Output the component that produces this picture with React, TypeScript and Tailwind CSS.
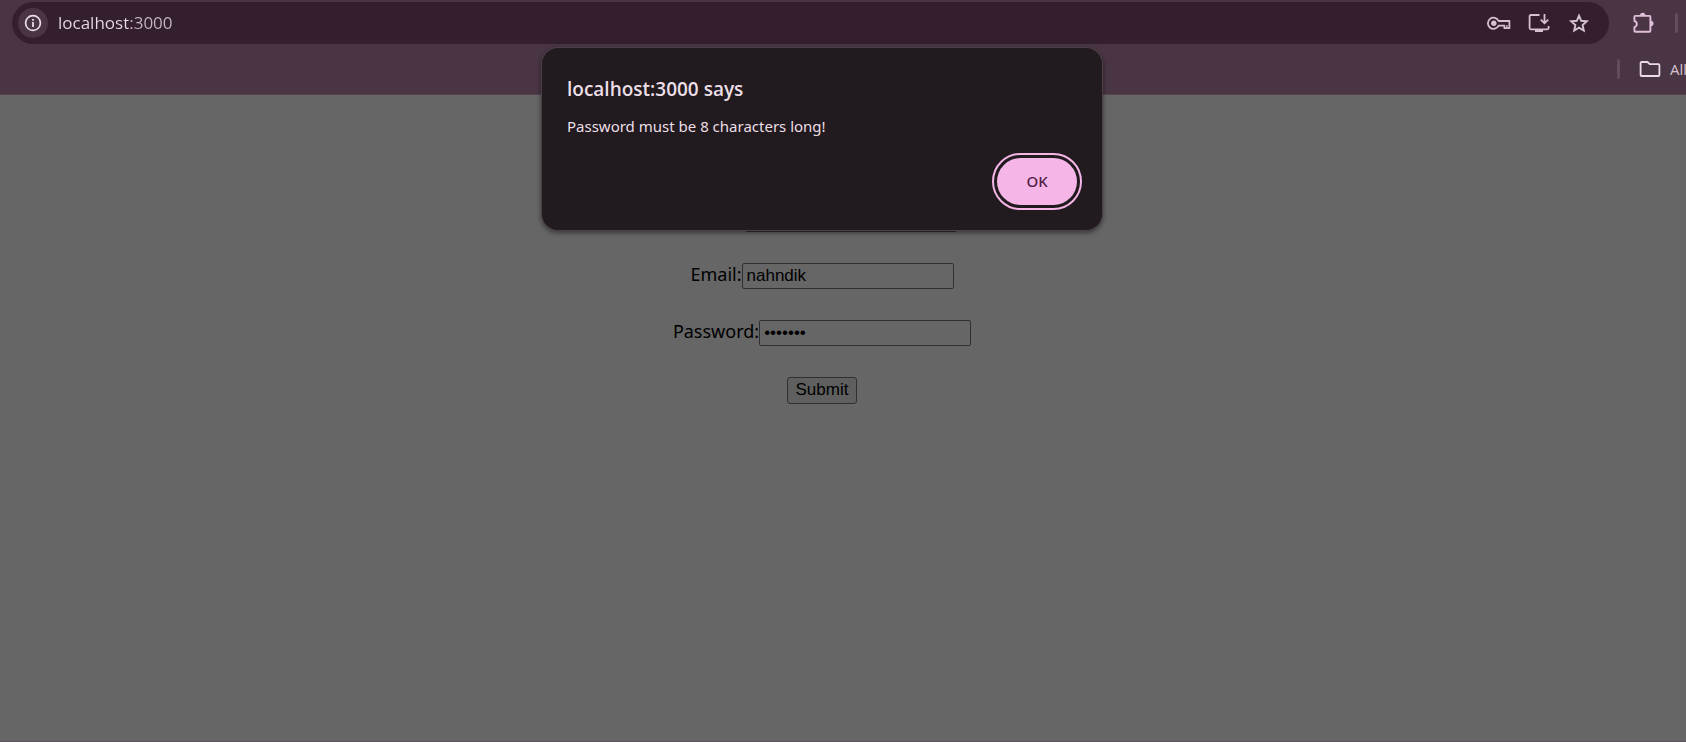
import React from "react";

function InfoIcon() {
  return (
    <svg width="18" height="18" viewBox="0 0 18 18" fill="none" aria-hidden="true">
      <circle cx="9" cy="9" r="7.4" stroke="currentColor" strokeWidth="1.7" />
      <path d="M9 8v5M9 4.9v1.8" stroke="currentColor" strokeWidth="1.8" />
    </svg>
  );
}

function KeyIcon() {
  return (
    <svg width="24" height="24" viewBox="0 0 24 24" fill="none" stroke="currentColor" strokeWidth="1.8" aria-hidden="true">
      <path d="M11.6 10H22.400v7.200h-5V14.600H11.600A5.600 5.600 0 1 1 11.600 10Z" strokeLinejoin="round" />
      <circle cx="6.800" cy="12.300" r="2.700" fill="currentColor" stroke="none" />
      <path d="M19.900 14v3" strokeWidth="1.200" />
    </svg>
  );
}

function InstallIcon() {
  return (
    <svg width="24" height="24" viewBox="0 0 24 24" fill="none" stroke="currentColor" strokeWidth="1.8" aria-hidden="true">
      <path d="M12.500 4H3.800a1.200 1.200 0 0 0-1.200 1.200v11.900a1.200 1.200 0 0 0 1.200 1.200h16.600a1.200 1.200 0 0 0 1.200-1.200V15" />
      <path d="M8 18h8v3h-8z" fill="currentColor" stroke="none" />
      <path d="M17.500 3v9M13.800 8.600l3.700 3.700 3.700-3.700" />
    </svg>
  );
}

function StarIcon() {
  return (
    <svg width="24" height="24" viewBox="0 0 24 24" fill="none" stroke="currentColor" strokeWidth="1.9" aria-hidden="true">
      <path d="m12 4.700 2.200 5.100 5.600.5-4.200 3.700 1.200 5.500-4.800-2.900-4.800 2.900 1.200-5.500-4.200-3.700 5.600-.5z" />
    </svg>
  );
}

function PuzzleIcon() {
  return (
    <svg width="24" height="24" viewBox="0 0 24 24" fill="none" aria-hidden="true">
      <path
        d="M4.400 4.900H18.400a1 1 0 0 1 1 1V19.800a1 1 0 0 1-1 1H4.400a1 1 0 0 1-1-1V16.200a3.200 3.200 0 0 0 0-6.200V5.900a1 1 0 0 1 1-1Z"
        stroke="currentColor"
        strokeWidth="1.900"
        strokeLinejoin="round"
      />
      <path d="M9 4.500a2.700 2.700 0 0 1 5.400 0zM19.800 9.800a2.700 2.700 0 0 1 0 5.400z" fill="currentColor" />
    </svg>
  );
}

function FolderIcon() {
  return (
    <svg width="22" height="18" viewBox="0 0 22 18" fill="none" stroke="currentColor" strokeWidth="1.8" aria-hidden="true">
      <path d="M2.600 2h5.900l2.200 2.200h8.700a1 1 0 0 1 1 1v9.800a1 1 0 0 1-1 1H2.600a1 1 0 0 1-1-1V3a1 1 0 0 1 1-1Z" strokeLinejoin="round" />
    </svg>
  );
}

function BrowserBar() {
  return (
    <header className="h-[95px] overflow-hidden border-b border-[#554350] bg-[#4a3544] pt-0.5 font-['Open_Sans','Noto_Sans',sans-serif]">
      <div className="flex items-center pl-3">
        <div className="flex h-[42px] grow items-center rounded-full bg-[#331f2e] pl-1.5 pr-[18px]">
          <button type="button" aria-label="Site information" className="flex size-[30px] shrink-0 items-center justify-center rounded-full bg-[#4a3544] text-[#ecdbe6]">
            <InfoIcon />
          </button>
          <input
            type="text"
            aria-label="Address"
            defaultValue="localhost:3000"
            className="ml-2.5 min-w-0 grow bg-[linear-gradient(90deg,#ecdbe6_70px,#c9b6c3_70px)] bg-clip-text text-[17px] text-transparent outline-none"
          />
          <div className="flex gap-4 text-[#d6c2cf]">
            <button type="button" aria-label="Manage passwords"><KeyIcon /></button>
            <button type="button" aria-label="Install app"><InstallIcon /></button>
            <button type="button" aria-label="Bookmark page"><StarIcon /></button>
          </div>
        </div>
        <button type="button" aria-label="Extensions" className="ml-[22px] text-[#dfbfd7]"><PuzzleIcon /></button>
        <span className="ml-5 mr-2 h-5 w-[3px] shrink-0 rounded-full bg-[#614d5c]" />
      </div>
      <div className="flex h-[50px] items-center justify-end">
        <span className="mr-[19px] h-5 w-[3px] rounded-full bg-[#614d5c]" />
        <button type="button" className="flex items-center gap-[9px] text-[15px] text-[#d6c2cf]">
          <span className="text-[#ecdbe6]"><FolderIcon /></span>
          <span className="w-4 overflow-hidden text-left">All</span>
        </button>
      </div>
    </header>
  );
}

const field =
  "h-[26px] w-[212px] rounded-[2px] border border-[#303030] bg-[#666] px-1 font-['Liberation_Sans',sans-serif] text-[17px] leading-5 text-black outline-none";

function LoginForm() {
  return (
    <form
      onSubmit={(event) => event.preventDefault()}
      className="flex flex-col items-center gap-[31px] pr-[42px] pt-[111px] font-['Noto_Sans',sans-serif] text-[18px] leading-[26px] text-black"
    >
      <div className="flex pl-[58px]">
        <input type="text" aria-label="Name" className={field} />
      </div>
      <div className="flex">
        <label htmlFor="email" className="-mt-0.5">Email:</label>
        <input id="email" type="text" defaultValue="nahndik" className={field} />
      </div>
      <div className="flex">
        <label htmlFor="password" className="-mt-0.5">Password:</label>
        <input id="password" type="password" defaultValue="1234567" className={field} />
      </div>
      <button type="submit" className="h-[27px] w-[70px] rounded-[3px] border border-[#303030] bg-[#5f5f5f] pb-0.5 font-['Liberation_Sans',sans-serif] text-[17px] leading-5">
        Submit
      </button>
    </form>
  );
}

function AlertDialog() {
  return (
    <div className="absolute inset-x-0 top-12 flex justify-center pr-[42px]">
      <div
        role="alertdialog"
        aria-labelledby="alert-title"
        aria-describedby="alert-message"
        className="w-[560px] rounded-2xl bg-[#211a1e] px-[25px] pb-[25px] pt-[27px] font-['Noto_Sans',sans-serif] text-[#ecdfe7] shadow-[0_0_0_1px_#4c4048,0_2px_5px_1px_rgba(0,0,0,0.45)]"
      >
        <h1 id="alert-title" className="font-['Open_Sans',sans-serif] text-[19px] font-semibold leading-7">localhost:3000 says</h1>
        <p id="alert-message" className="mt-[11px] text-[15px] leading-6">Password must be 8 characters long!</p>
        <div className="mt-5 flex justify-end">
          <button
            type="button"
            className="h-[47px] w-20 rounded-full bg-[#f5b5e7] text-[15px] font-medium text-[#522049] outline-2 outline-offset-3 outline-[#f5b5e7]"
          >
            OK
          </button>
        </div>
      </div>
    </div>
  );
}

export default function App() {
  return (
    <div className="relative flex min-h-screen flex-col overflow-hidden bg-[#666]">
      <BrowserBar />
      <main className="grow border-b border-[#5d555b]">
        <LoginForm />
      </main>
      <AlertDialog />
    </div>
  );
}
